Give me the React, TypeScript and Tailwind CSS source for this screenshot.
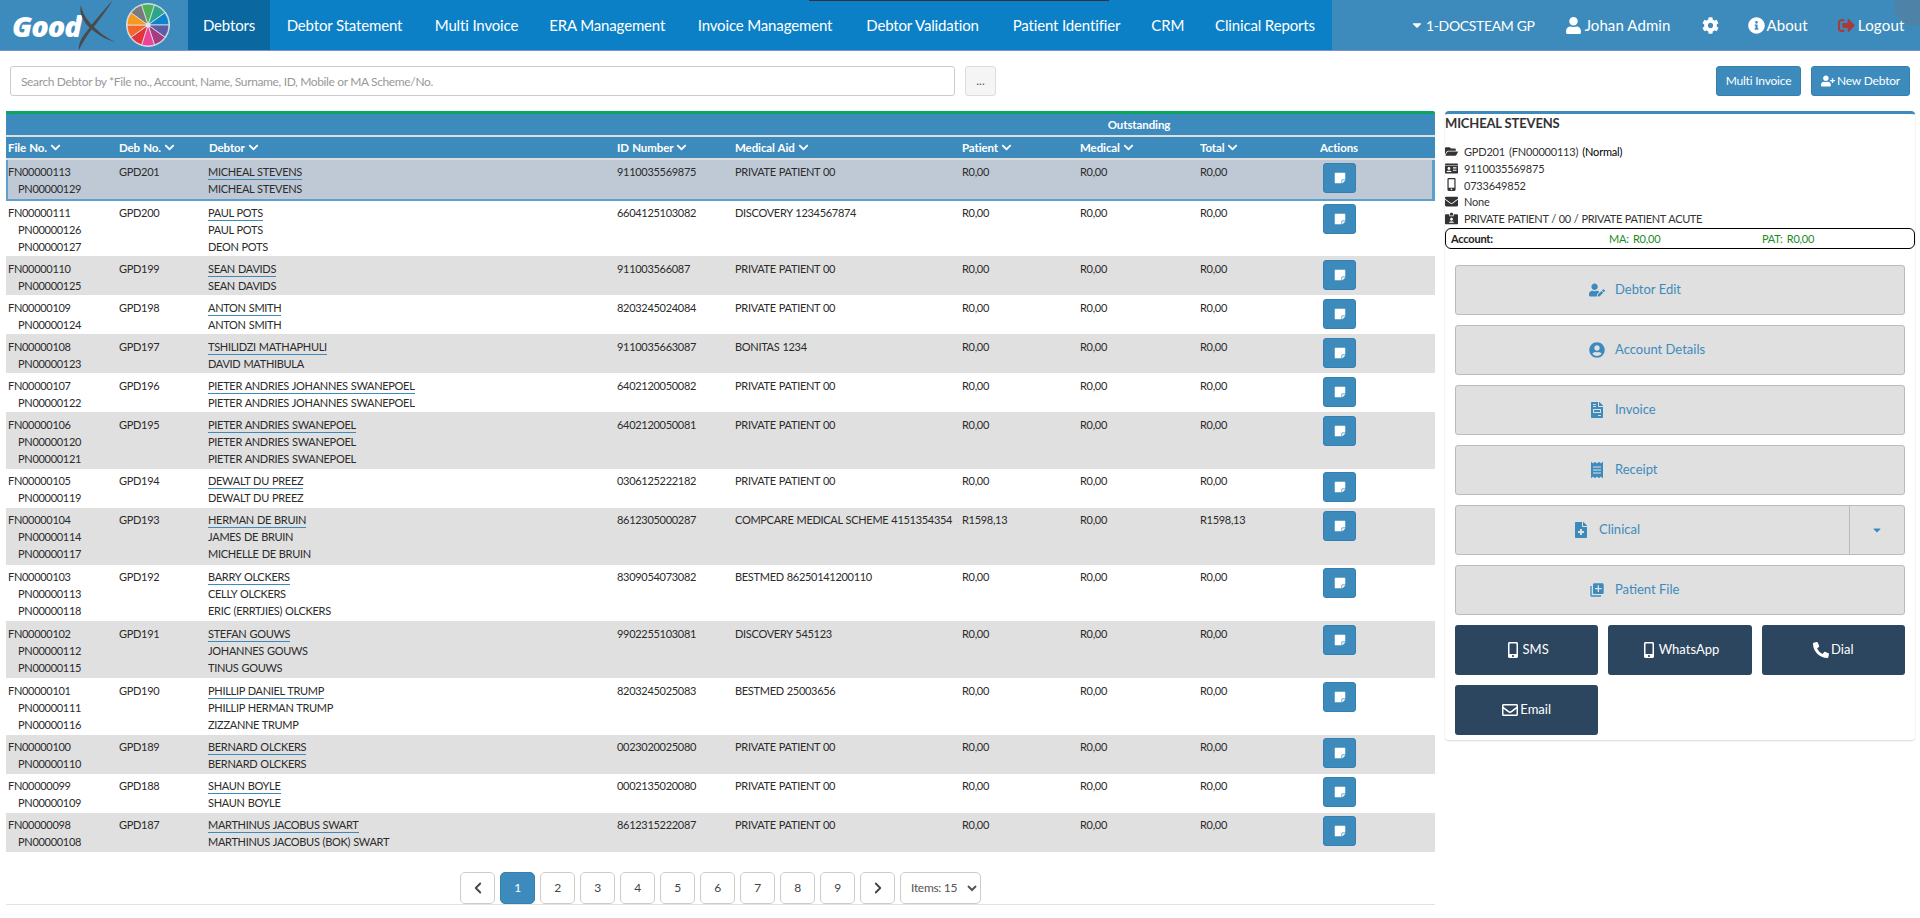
import { ChevronLeft, ChevronRight } from "lucide-react";
import { ReactNode } from "react";
import {
  FaCaretDown,
  FaChevronDown,
  FaCog,
  FaEnvelope,
  FaFileInvoice,
  FaFileMedical,
  FaFolderOpen,
  FaIdCard,
  FaIdCardAlt,
  FaInfoCircle,
  FaMobileAlt,
  FaPhoneAlt,
  FaReceipt,
  FaRegEnvelope,
  FaSignOutAlt,
  FaStickyNote,
  FaUser,
  FaUserCircle,
  FaUserEdit,
  FaUserPlus,
} from "react-icons/fa";
import { MdLibraryAdd } from "react-icons/md";

type Debtor = {
  file: string;
  deb: string;
  patients: string[];
  names: string[];
  id: string;
  aid: string;
  patient?: string;
  total?: string;
};

const PP = "PRIVATE PATIENT 00";

const debtors: Debtor[] = [
  { file: "FN00000113", deb: "GPD201", patients: ["PN00000129"], names: ["MICHEAL STEVENS", "MICHEAL STEVENS"], id: "9110035569875", aid: PP },
  { file: "FN00000111", deb: "GPD200", patients: ["PN00000126", "PN00000127"], names: ["PAUL POTS", "PAUL POTS", "DEON POTS"], id: "6604125103082", aid: "DISCOVERY 1234567874" },
  { file: "FN00000110", deb: "GPD199", patients: ["PN00000125"], names: ["SEAN DAVIDS", "SEAN DAVIDS"], id: "911003566087", aid: PP },
  { file: "FN00000109", deb: "GPD198", patients: ["PN00000124"], names: ["ANTON SMITH", "ANTON SMITH"], id: "8203245024084", aid: PP },
  { file: "FN00000108", deb: "GPD197", patients: ["PN00000123"], names: ["TSHILIDZI MATHAPHULI", "DAVID MATHIBULA"], id: "9110035663087", aid: "BONITAS 1234" },
  { file: "FN00000107", deb: "GPD196", patients: ["PN00000122"], names: ["PIETER ANDRIES JOHANNES SWANEPOEL", "PIETER ANDRIES JOHANNES SWANEPOEL"], id: "6402120050082", aid: PP },
  { file: "FN00000106", deb: "GPD195", patients: ["PN00000120", "PN00000121"], names: ["PIETER ANDRIES SWANEPOEL", "PIETER ANDRIES SWANEPOEL", "PIETER ANDRIES SWANEPOEL"], id: "6402120050081", aid: PP },
  { file: "FN00000105", deb: "GPD194", patients: ["PN00000119"], names: ["DEWALT DU PREEZ", "DEWALT DU PREEZ"], id: "0306125222182", aid: PP },
  { file: "FN00000104", deb: "GPD193", patients: ["PN00000114", "PN00000117"], names: ["HERMAN DE BRUIN", "JAMES DE BRUIN", "MICHELLE DE BRUIN"], id: "8612305000287", aid: "COMPCARE MEDICAL SCHEME 4151354354", patient: "R1598,13", total: "R1598,13" },
  { file: "FN00000103", deb: "GPD192", patients: ["PN00000113", "PN00000118"], names: ["BARRY OLCKERS", "CELLY OLCKERS", "ERIC (ERRTJIES) OLCKERS"], id: "8309054073082", aid: "BESTMED 86250141200110" },
  { file: "FN00000102", deb: "GPD191", patients: ["PN00000112", "PN00000115"], names: ["STEFAN GOUWS", "JOHANNES GOUWS", "TINUS GOUWS"], id: "9902255103081", aid: "DISCOVERY 545123" },
  { file: "FN00000101", deb: "GPD190", patients: ["PN00000111", "PN00000116"], names: ["PHILLIP DANIEL TRUMP", "PHILLIP HERMAN TRUMP", "ZIZZANNE TRUMP"], id: "8203245025083", aid: "BESTMED 25003656" },
  { file: "FN00000100", deb: "GPD189", patients: ["PN00000110"], names: ["BERNARD OLCKERS", "BERNARD OLCKERS"], id: "0023020025080", aid: PP },
  { file: "FN00000099", deb: "GPD188", patients: ["PN00000109"], names: ["SHAUN BOYLE", "SHAUN BOYLE"], id: "0002135020080", aid: PP },
  { file: "FN00000098", deb: "GPD187", patients: ["PN00000108"], names: ["MARTHINUS JACOBUS SWART", "MARTHINUS JACOBUS (BOK) SWART"], id: "8612315222087", aid: PP },
];

const navItems = [
  { label: "Debtors", width: "w-[82px]", active: true },
  { label: "Debtor Statement", width: "w-[149px]" },
  { label: "Multi Invoice", width: "w-[115px]" },
  { label: "ERA Management", width: "w-[146.5px]" },
  { label: "Invoice Management", width: "w-[169px]" },
  { label: "Debtor Validation", width: "w-[146px]" },
  { label: "Patient Identifier", width: "w-[142px]" },
  { label: "CRM", width: "w-[60.5px]" },
  { label: "Clinical Reports", width: "w-[134px]" },
];

const wheel = ["#4db05a", "#2ca58d", "#0f83c9", "#5b5ea6", "#a43c7f", "#ec4398", "#e3343c", "#f4672a", "#f59a1f", "#7a7a7a"];

function Wheel() {
  const point = (deg: number) => {
    const a = ((deg - 90) * Math.PI) / 180;
    return `${22 + 21 * Math.cos(a)} ${22 + 21 * Math.sin(a)}`;
  };
  return (
    <svg width="44" height="44" viewBox="0 0 44 44">
      <circle cx="22" cy="22" r="22" fill="#d5dbe3" />
      {wheel.map((color, i) => (
        <path
          key={color}
          d={`M22 22L${point(i * 36 - 18)}A21 21 0 0 1 ${point(i * 36 + 18)}Z`}
          fill={color}
          stroke="#dfe5ea"
          strokeWidth="0.8"
        />
      ))}
      <circle cx="22" cy="22" r="2.5" fill="#dfe5ea" />
    </svg>
  );
}

function Logo() {
  return (
    <div className="relative flex h-full w-[188px] shrink-0 items-center bg-[#3d8bbd] pl-[12px]">
      <span className="font-['Open_Sans',sans-serif] text-[29px] font-extrabold italic leading-none tracking-[-1.1px] text-white">
        Good
      </span>
      <svg className="absolute left-[76px] top-0" width="42" height="50" viewBox="0 0 42 50">
        <path d="M5 5C6 12 10 19 16 25C23 32 30 38 40 42C30 40 20 34 12 26C6 19 3 12 5 5Z" fill="#4a4a4a" />
        <path d="M37 0C30 12 18 26 11 36C8 41 5 45 3 50C2 44 6 37 11 31C19 20 29 9 37 0Z" fill="#4a4a4a" />
      </svg>
      <div className="absolute left-[126px] top-[3px]">
        <Wheel />
      </div>
    </div>
  );
}

function TopBar() {
  return (
    <header className="relative flex h-[51px] shrink-0 border-b border-[#7c8fd2] bg-[#3d8bbd] text-[15px] text-white">
      <Logo />
      <nav className="flex h-full bg-[#0c80c6]">
        {navItems.map((item) => (
          <div
            key={item.label}
            className={`flex h-full items-center justify-center tracking-[-0.15px] ${item.width} ${item.active ? "bg-[#0a679f]" : ""}`}
          >
            {item.label}
          </div>
        ))}
      </nav>
      <div className="flex flex-1 items-center">
        <FaCaretDown className="ml-[78px] text-[14px]" />
        <span className="ml-[2px] text-[14px] tracking-[-0.35px]">1-DOCSTEAM GP</span>
        <FaUser className="ml-[30px] text-[17px]" />
        <span className="ml-[3px] tracking-[0.1px]">Johan Admin</span>
        <FaCog className="ml-[31px] text-[17px]" />
        <FaInfoCircle className="ml-[29px] text-[17px]" />
        <span className="ml-[2px] tracking-[0.1px]">About</span>
        <FaSignOutAlt className="ml-[30px] text-[17px] text-[#a83a3a]" />
        <span className="ml-[3px] tracking-[0.2px]">Logout</span>
      </div>
      <div className="absolute left-[809px] top-0 h-px w-[300px] bg-[#333333]" />
      <div className="absolute right-[-14px] top-[-14px] h-[40px] w-[40px] rounded-full bg-[#5a7f98]/60" />
    </header>
  );
}

function Toolbar() {
  return (
    <div className="mt-[15px] flex h-[30px] shrink-0 pl-[10px] pr-[10px]">
      <input
        className="h-full w-[945px] rounded-[3px] border border-[#cccccc] bg-white px-[10px] text-[12px] tracking-[-0.36px] outline-none placeholder:text-[#999999]"
        placeholder="Search Debtor by *File no., Account, Name, Surname, ID, Mobile or MA Scheme/No."
      />
      <button className="ml-[10px] h-full w-[31px] rounded-[3px] border border-[#dddddd] bg-[#f5f5f5] text-[12px] text-[#555555]">
        ...
      </button>
      <button className="ml-auto h-full w-[85px] rounded-[3px] border border-[#3580b0] bg-[#3d8bbd] text-[12px] tracking-[-0.2px] text-white">
        Multi Invoice
      </button>
      <button className="ml-[10px] flex h-full w-[99px] items-center justify-center gap-[2px] rounded-[3px] border border-[#3580b0] bg-[#3d8bbd] text-[12px] tracking-[-0.2px] text-white">
        <FaUserPlus className="text-[14px]" />
        New Debtor
      </button>
    </div>
  );
}

const gridCols = "grid grid-cols-[111px_90px_408px_118px_227px_118px_120px_120px_1fr]";
const headRow = "h-[21px] items-center bg-[#3d8bbd] text-[11.5px] font-bold tracking-[-0.1px] text-white";

function SortHead({ label }: { label: string }) {
  return (
    <div className="flex items-center gap-[3px] pl-[2px]">
      {label}
      <FaChevronDown className="text-[11px]" />
    </div>
  );
}

function DebtorRow({ row, index }: { row: Debtor; index: number }) {
  const selected = index === 0;
  const height = selected
    ? "h-[41px] pt-[2.5px]"
    : index === 1
      ? "h-[55px] pt-[2.5px]"
      : row.names.length === 3
        ? "h-[56.8px] pt-[3.5px]"
        : "h-[39px] pt-[3.5px]";
  const bg = selected
    ? "bg-[#bfc9d5] shadow-[inset_2px_0_#5aa2cd,inset_-3px_0_#5aa2cd,inset_0_-2px_#5aa2cd]"
    : index % 2 === 0
      ? "bg-[#e0e0e0]"
      : "bg-white";
  return (
    <div className={`${gridCols} ${height} ${bg} text-[#2b2b2b]`}>
      <div className="pl-[2px]">
        <div>{row.file}</div>
        {row.patients.map((p) => (
          <div key={p} className="pl-[10px]">
            {p}
          </div>
        ))}
      </div>
      <div className="pl-[2px]">{row.deb}</div>
      <div className="pl-[1px]">
        {row.names.map((name, i) =>
          i === 0 ? (
            <div key={i}>
              <span className="inline-block h-[17px] border-b border-[#3d8bbd]">{name}</span>
            </div>
          ) : (
            <div key={i}>{name}</div>
          ),
        )}
      </div>
      <div className="pl-[2px]">{row.id}</div>
      <div className="whitespace-nowrap pl-[2px]">{row.aid}</div>
      <div className="pl-[2px]">{row.patient ?? "R0,00"}</div>
      <div className="pl-[2px]">R0,00</div>
      <div className="pl-[2px]">{row.total ?? "R0,00"}</div>
      <div className="pl-[5px]">
        <button className="flex h-[30px] w-[33px] items-center justify-center rounded-[3px] border border-[#3580b0] bg-[#3d8bbd] text-white">
          <FaStickyNote className="text-[12px]" />
        </button>
      </div>
    </div>
  );
}

function DebtorTable() {
  return (
    <section className="w-[1429px] shrink-0 text-[11px] leading-[17px] tracking-[-0.3px] [word-spacing:0.5px]">
      <div className="h-[3px] rounded-tr-[2px] bg-[#0aa55f]" />
      <div className={`${gridCols} ${headRow}`}>
        <div className="col-start-6 col-end-9 text-center">Outstanding</div>
      </div>
      <div className="h-[2px] bg-[#dddddd]" />
      <div className={`${gridCols} ${headRow}`}>
        <SortHead label="File No." />
        <SortHead label="Deb No." />
        <SortHead label="Debtor" />
        <SortHead label="ID Number" />
        <SortHead label="Medical Aid" />
        <SortHead label="Patient" />
        <SortHead label="Medical" />
        <SortHead label="Total" />
        <div className="w-[42px] text-center">Actions</div>
      </div>
      <div className="h-[2px] bg-[#dddddd]" />
      {debtors.map((row, i) => (
        <DebtorRow key={row.file} row={row} index={i} />
      ))}
      <div className="mt-[20px] flex h-[33px] justify-center gap-[5px] border-b border-[#e2e2e2] text-[12px] text-[#555555]">
        <PageButton>
          <ChevronLeft size={18} strokeWidth={2.4} />
        </PageButton>
        {[1, 2, 3, 4, 5, 6, 7, 8, 9].map((n) => (
          <PageButton key={n} active={n === 1}>
            {n}
          </PageButton>
        ))}
        <PageButton>
          <ChevronRight size={18} strokeWidth={2.4} />
        </PageButton>
        <select className="h-[32px] w-[81px] rounded-[5px] border border-[#cccccc] bg-white pl-[6px] text-[12px] text-[#555555]">
          <option>Items: 15</option>
        </select>
      </div>
    </section>
  );
}

function PageButton({ children, active }: { children: ReactNode; active?: boolean }) {
  return (
    <button
      className={`flex h-[32px] w-[35px] items-center justify-center rounded-[5px] border ${active ? "border-[#3580b0] bg-[#3d8bbd] text-white" : "border-[#cccccc] bg-white text-[#444444]"}`}
    >
      {children}
    </button>
  );
}

function InfoLine({ icon, children }: { icon: ReactNode; children: ReactNode }) {
  return (
    <div className="flex h-[16.8px] items-center">
      <span className="flex w-[19px] shrink-0 text-[13px]">{icon}</span>
      {children}
    </div>
  );
}

function ActionButton({ icon, label, iconWidth = "w-[149px]" }: { icon: ReactNode; label: string; iconWidth?: string }) {
  return (
    <div className="flex h-[50px] items-center rounded-[3px] border border-[#bbbbbb] bg-[#e0e0e0] text-[13px] tracking-[0px] text-[#3d8bbd] [word-spacing:0px]">
      <span className={`flex shrink-0 justify-end text-[16px] ${iconWidth}`}>{icon}</span>
      <span className="ml-[10px]">{label}</span>
    </div>
  );
}

function DarkButton({ icon, label }: { icon: ReactNode; label: string }) {
  return (
    <div className="flex h-[50px] items-center justify-center gap-[2px] rounded-[3px] bg-[#2d4660] text-[13px] tracking-[0px] text-white">
      <span className="text-[16px]">{icon}</span>
      {label}
    </div>
  );
}

function SidePanel() {
  return (
    <aside className="ml-[10px] h-[629px] w-[470px] shrink-0 rounded-[4px] border-t-[3px] border-[#3d8bbd] text-[11px] leading-[17px] tracking-[-0.2px] text-[#333333] shadow-[0_1px_2px_rgba(0,0,0,0.15)] [word-spacing:1.5px]">
      <div className="mt-[1px] text-[13px] font-bold tracking-[-0.15px] [word-spacing:0px]">MICHEAL STEVENS</div>
      <div className="mt-[11px]">
        <InfoLine icon={<FaFolderOpen />}>
          <span>
            GPD201 (FN00000113) <span className="text-black">(Normal)</span>
          </span>
        </InfoLine>
        <InfoLine icon={<FaIdCard />}>9110035569875</InfoLine>
        <InfoLine icon={<FaMobileAlt />}>0733649852</InfoLine>
        <InfoLine icon={<FaEnvelope />}>None</InfoLine>
        <InfoLine icon={<FaIdCardAlt />}>
          <span className="tracking-[-0.35px] [word-spacing:0.5px]">PRIVATE PATIENT / 00 / PRIVATE PATIENT ACUTE</span>
        </InfoLine>
      </div>
      <div className="mt-[1px] grid h-[21px] grid-cols-[158px_153px_1fr] items-center rounded-[6px] border-[1.5px] border-black pl-[5px]">
        <span className="font-bold text-[#222222]">Account:</span>
        <span className="text-[#1d8a1d]">MA: R0,00</span>
        <span className="text-[#1d8a1d]">PAT: R0,00</span>
      </div>
      <div className="mt-[16px] flex flex-col gap-[10px] px-[10px]">
        <ActionButton icon={<FaUserEdit />} label="Debtor Edit" />
        <ActionButton icon={<FaUserCircle />} label="Account Details" />
        <ActionButton icon={<FaFileInvoice />} label="Invoice" />
        <ActionButton icon={<FaReceipt />} label="Receipt" />
        <div className="flex h-[50px] rounded-[3px] border border-[#bbbbbb] bg-[#e0e0e0] text-[#3d8bbd]">
          <div className="flex flex-1 items-center text-[13px] tracking-[0px]">
            <span className="flex w-[133px] shrink-0 justify-end text-[16px]">
              <FaFileMedical />
            </span>
            <span className="ml-[10px]">Clinical</span>
          </div>
          <div className="flex w-[55px] items-center justify-center border-l border-[#bbbbbb] text-[12px]">
            <FaCaretDown />
          </div>
        </div>
        <ActionButton icon={<MdLibraryAdd />} label="Patient File" />
        <div className="grid grid-cols-3 gap-[10px]">
          <DarkButton icon={<FaMobileAlt />} label="SMS" />
          <DarkButton icon={<FaMobileAlt />} label="WhatsApp" />
          <DarkButton icon={<FaPhoneAlt />} label="Dial" />
          <DarkButton icon={<FaRegEnvelope />} label="Email" />
        </div>
      </div>
    </aside>
  );
}

export default function App() {
  return (
    <div className="flex h-[918px] w-full flex-col overflow-hidden bg-white font-['Lato',sans-serif]">
      <TopBar />
      <Toolbar />
      <main className="mt-[15px] flex pl-[6px]">
        <DebtorTable />
        <SidePanel />
      </main>
    </div>
  );
}
